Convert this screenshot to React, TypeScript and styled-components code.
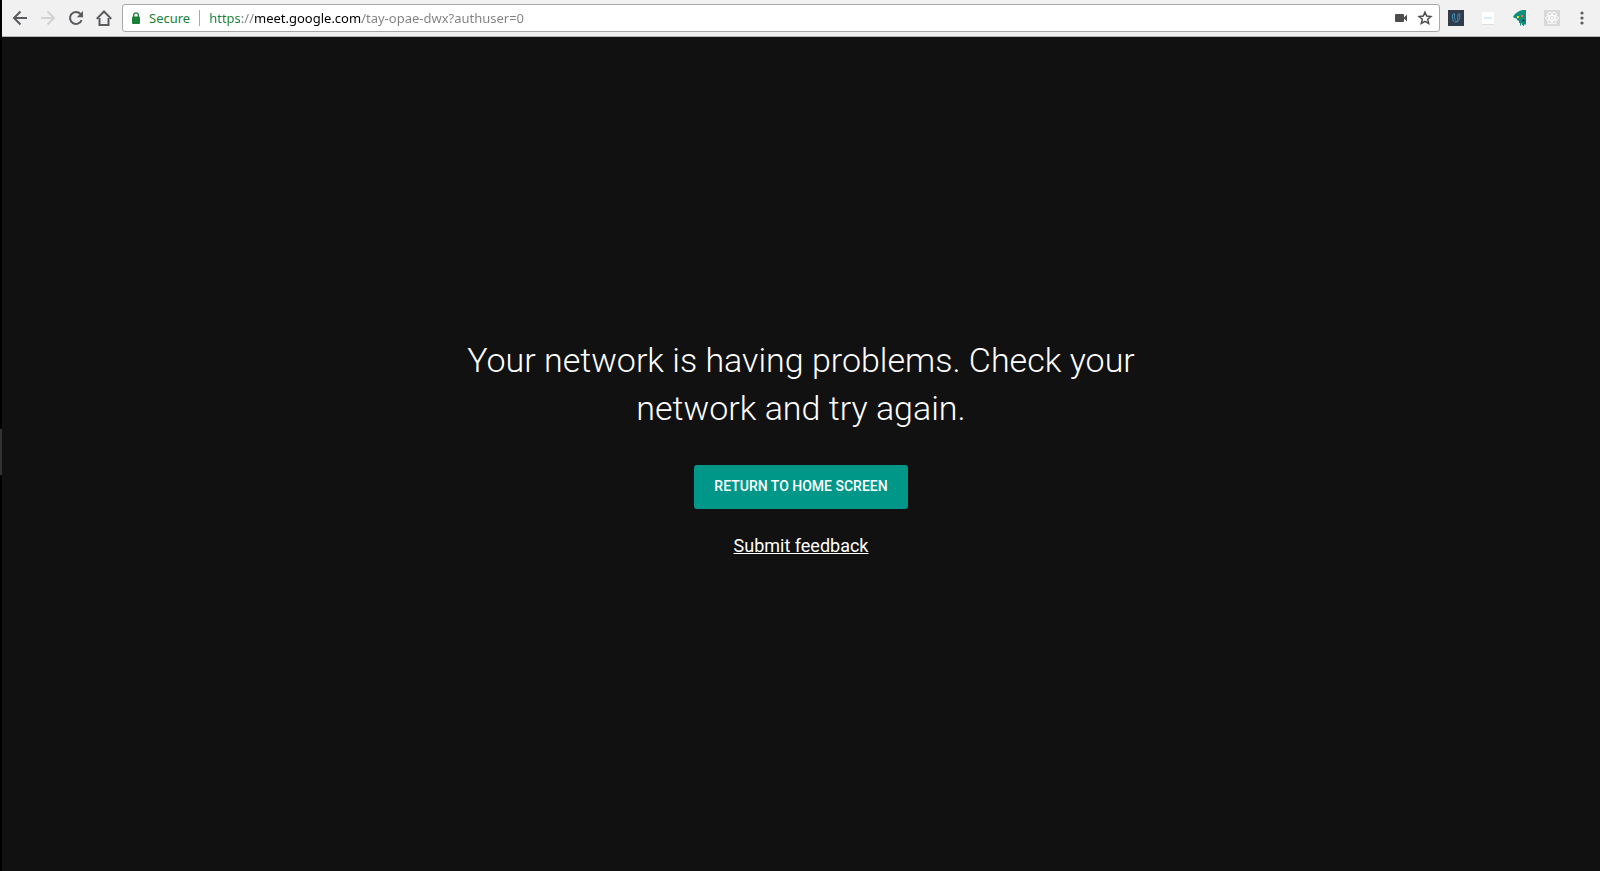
import React from 'react';
import styled, { createGlobalStyle } from 'styled-components';

const GlobalStyle = createGlobalStyle`
  * { box-sizing: border-box; }
  body { margin: 0; background: #111; }
`;

const Desktop = styled.div`
  display: flex;
  min-height: 100vh;
  background: #000;
`;

const ScreenEdge = styled.div`
  flex: none;
  width: 2px;
  display: flex;
  flex-direction: column;
  justify-content: center;
  padding-top: 32px;
`;

const EdgeHandle = styled.div`
  height: 46px;
  background: #333;
`;

const Browser = styled.div`
  flex: 1;
  min-width: 0;
  display: flex;
  flex-direction: column;
`;

const Toolbar = styled.header`
  display: flex;
  align-items: center;
  height: 37px;
  padding: 0 4px 0 4px;
  background: #f1f1f1;
  border-bottom: 1px solid #b6b4b6;
`;

const ToolButton = styled.button<{ $width?: number }>`
  display: flex;
  align-items: center;
  justify-content: center;
  flex: none;
  width: ${(p) => p.$width ?? 28}px;
  height: 28px;
  padding: 0;
  border: 0;
  background: none;
  color: #5a5a5f;

  &:disabled { color: #d2d2d4; }
`;

const AddressBar = styled.div`
  flex: 1;
  min-width: 0;
  display: flex;
  align-items: center;
  height: 28px;
  margin-left: 4px;
  padding: 0 2px 0 8px;
  background: #fff;
  border: 1px solid #a8a8a8;
  border-radius: 3px;
  font-family: "Noto Sans", "Open Sans", sans-serif;
  font-size: 13px;
  line-height: 20px;
`;

const SecureBadge = styled.button`
  display: flex;
  align-items: center;
  gap: 8px;
  height: 16px;
  padding: 0 9px 0 0;
  border: 0;
  border-right: 1px solid #a9a9a9;
  background: none;
  color: #188038;
  font: inherit;
`;

const UrlInput = styled.input`
  flex: 1;
  min-width: 0;
  height: 20px;
  margin-left: 9px;
  padding: 0;
  border: 0;
  outline: 0;
  font: inherit;
  color: transparent;
  caret-color: #000;
  background: linear-gradient(
    to right,
    #188038 0 33px,
    #808080 33px 46px,
    #000 46px 153px,
    #808080 153px
  );
  background-clip: text;
`;

const Page = styled.main`
  flex: 1;
  display: flex;
  flex-direction: column;
  align-items: center;
  justify-content: center;
  padding: 0 16px 14px;
  background: #111;
  color: #fff;
  font-family: Roboto, sans-serif;
`;

const Message = styled.h1`
  max-width: 720px;
  margin: 0 0 33px;
  font-size: 34px;
  font-weight: 300;
  line-height: 48px;
  text-align: center;
`;

const HomeButton = styled.button`
  height: 44px;
  padding: 0 20px 2px;
  border: 0;
  border-radius: 3px;
  background: #009688;
  color: #fff;
  font: 500 14px/20px Roboto, sans-serif;
  text-transform: uppercase;
`;

const FeedbackLink = styled.a`
  margin-top: 25px;
  color: #fff;
  font-size: 18px;
  line-height: 24px;
`;

const BackIcon = () => (
  <svg width="16" height="16" viewBox="0 0 16 16" fill="none" stroke="currentColor" strokeWidth="2">
    <path d="M15 8H2.5M8.5 1.5 2 8l6.5 6.5" />
  </svg>
);

const ForwardIcon = () => (
  <svg width="16" height="16" viewBox="0 0 16 16" fill="none" stroke="currentColor" strokeWidth="2">
    <path d="M1 8h12.500M7.500 1.500 14 8l-6.500 6.500" />
  </svg>
);

const ReloadIcon = () => (
  <svg width="16" height="16" viewBox="0 0 16 16" fill="none" stroke="currentColor" strokeWidth="2">
    <path d="M13.600 10.200A6 6 0 1 1 12.500 4" />
    <path d="M15 1v6.200H8.800z" fill="currentColor" stroke="none" />
  </svg>
);

const HomeIcon = () => (
  <svg width="16" height="16" viewBox="0 0 16 16" fill="none" stroke="currentColor" strokeWidth="2">
    <path d="M3.500 8v7h9V8M.7 8.900 8 1.500l7.300 7.400" />
  </svg>
);

const LockIcon = () => (
  <svg width="10" height="12" viewBox="0 0 10 12">
    <rect x="1" y="4.500" width="8" height="7.500" rx="1" fill="#188038" />
    <path d="M2.700 5V3.200a2.300 2.300 0 0 1 4.600 0V5" fill="none" stroke="#188038" strokeWidth="1.300" />
  </svg>
);

const CameraIcon = () => (
  <svg width="14" height="10" viewBox="0 0 14 10" fill="#4d4d4d">
    <rect x="1" y="1" width="9" height="8" rx="1" />
    <path d="M9.500 5 13 1.500v7z" />
  </svg>
);

const StarIcon = () => (
  <svg width="16" height="16" viewBox="0 0 16 16" fill="none" stroke="#4d4d4d" strokeWidth="1.500">
    <path d="M8 2.200 9.700 6.100l4.200.4-3.200 2.800 1 4.200L8 11.300l-3.700 2.200 1-4.200L2.100 6.500l4.200-.4z" />
  </svg>
);

const UdacityIcon = () => (
  <svg width="16" height="16" viewBox="0 0 16 16">
    <rect width="16" height="16" fill="#303c4a" />
    <path
      d="M6.500 3.800 4.500 4.600V8c0 2.400 1.200 4 3.300 4 2.400 0 4-1.800 4-4.500V3.800l-2 .8V8c0 2-.8 3.500-2 4M6.500 3.800v3.900c0 1.600.6 2.400 1.500 2.400"
      fill="none"
      stroke="#4e9ccc"
      strokeWidth="0.800"
    />
  </svg>
);

const CardIcon = () => (
  <svg width="14" height="14" viewBox="0 0 14 14">
    <rect x="1" y="1.500" width="12" height="12" fill="#d0d0d0" />
    <rect x="1" y="1" width="12" height="12" fill="#fff" />
    <path d="M3 7h8" stroke="#9fd3f2" strokeDasharray="1.600 .3" />
  </svg>
);

const MonsterIcon = () => (
  <svg width="16" height="16" viewBox="0 0 16 16">
    <path
      d="M14 0H10.500C7 .8 3.800 2.800 2 5.200L1 7l1.500 1L5 8.800V10L7 11v2h1v2.500h1V13.500h1V15h1v1h1v-1.500h2z"
      fill="#0b8f7c"
    />
    <rect x="5" y="6" width="2" height="2" fill="#ffe100" />
    <rect x="9" y="5" width="2" height="2" fill="#ff5f57" />
    <path d="M10.500 9.500h2v2h-2z" fill="#17333a" />
  </svg>
);

const ReactIcon = () => (
  <svg width="16" height="16" viewBox="0 0 16 16">
    <rect width="16" height="16" fill="#d8d8d8" />
    <g fill="none" stroke="#fff">
      <ellipse cx="8" cy="8" rx="6.500" ry="2.500" />
      <ellipse cx="8" cy="8" rx="6.500" ry="2.500" transform="rotate(60 8 8)" />
      <ellipse cx="8" cy="8" rx="6.500" ry="2.500" transform="rotate(120 8 8)" />
    </g>
    <circle cx="8" cy="8" r="1.300" fill="#fff" />
  </svg>
);

const MenuIcon = () => (
  <svg width="4" height="14" viewBox="0 0 4 14" fill="currentColor">
    <circle cx="2" cy="2" r="1.600" />
    <circle cx="2" cy="7" r="1.600" />
    <circle cx="2" cy="12" r="1.600" />
  </svg>
);

export default function App() {
  return (
    <Desktop>
      <GlobalStyle />
      <ScreenEdge>
        <EdgeHandle />
      </ScreenEdge>
      <Browser>
        <Toolbar>
          <ToolButton aria-label="Back"><BackIcon /></ToolButton>
          <ToolButton aria-label="Forward" disabled><ForwardIcon /></ToolButton>
          <ToolButton aria-label="Reload"><ReloadIcon /></ToolButton>
          <ToolButton aria-label="Home"><HomeIcon /></ToolButton>
          <AddressBar>
            <SecureBadge>
              <LockIcon />
              Secure
            </SecureBadge>
            <UrlInput
              aria-label="Address"
              type="text"
              spellCheck={false}
              defaultValue="https://meet.google.com/tay-opae-dwx?authuser=0"
            />
            <ToolButton $width={24} aria-label="Camera access"><CameraIcon /></ToolButton>
            <ToolButton $width={24} aria-label="Bookmark this page"><StarIcon /></ToolButton>
          </AddressBar>
          <ToolButton $width={32} aria-label="Udacity"><UdacityIcon /></ToolButton>
          <ToolButton $width={32} aria-label="Card extension"><CardIcon /></ToolButton>
          <ToolButton $width={32} aria-label="Monster extension"><MonsterIcon /></ToolButton>
          <ToolButton $width={32} aria-label="React Developer Tools"><ReactIcon /></ToolButton>
          <ToolButton aria-label="Menu"><MenuIcon /></ToolButton>
        </Toolbar>
        <Page>
          <Message>Your network is having problems. Check your network and try again.</Message>
          <HomeButton>Return to home screen</HomeButton>
          <FeedbackLink href="#feedback">Submit feedback</FeedbackLink>
        </Page>
      </Browser>
    </Desktop>
  );
}
